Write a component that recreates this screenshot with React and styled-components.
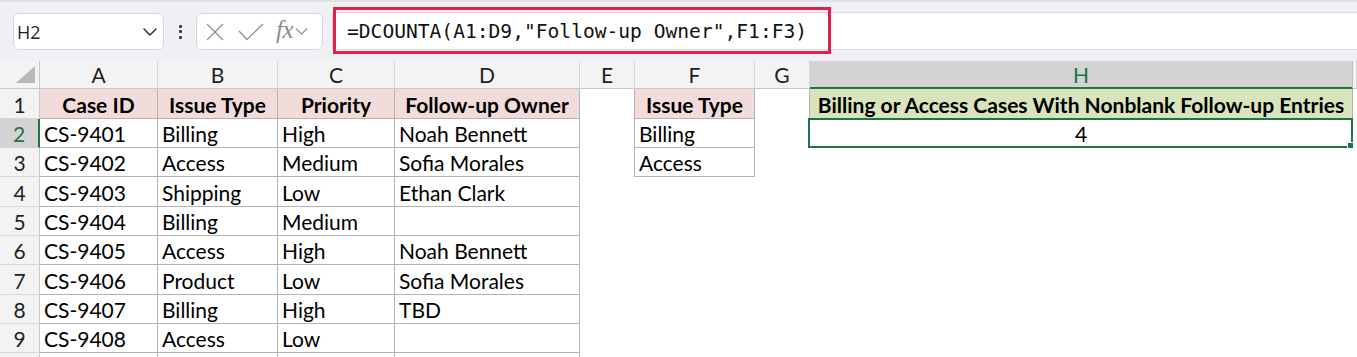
import React from 'react';
import styled, { createGlobalStyle } from 'styled-components';

const GlobalStyle = createGlobalStyle`
  html, body { margin: 0; padding: 0; background: #ffffff; }
  body { font-family: Lato, "Liberation Sans", sans-serif; }
`;

const Page = styled.div`
  width: 1357px;
  height: 357px;
  overflow: hidden;
  background: #ffffff;
`;

const Toolbar = styled.div`
  box-sizing: border-box;
  height: 61px;
  background: #eef0f3;
  border-top: 2px solid #dfe2e6;
  padding: 11px 0 0 13px;
  display: flex;
  align-items: flex-start;
`;

const NameBox = styled.div`
  box-sizing: border-box;
  width: 151px;
  height: 37px;
  background: #ffffff;
  border: 1px solid #d5d7da;
  border-radius: 6px;
  display: flex;
  align-items: center;
  justify-content: space-between;
  padding: 0 6px 0 3px;
  font-family: "Open Sans", "Noto Sans", sans-serif;
  font-size: 18px;
  color: #1f1f1f;
`;

const Dots = styled.div`
  width: 32px;
  height: 37px;
  display: flex;
  flex-direction: column;
  align-items: center;
  justify-content: center;
  gap: 2.5px;
`;

const Dot = styled.span`
  width: 3px;
  height: 3px;
  border-radius: 1px;
  background: #3c3c3c;
`;

const FxBox = styled.div`
  box-sizing: border-box;
  width: 127px;
  height: 37px;
  background: #ffffff;
  border: 1px solid #d5d7da;
  border-radius: 6px;
  display: flex;
  align-items: center;
  padding: 0 0 0 9px;
`;

const FxText = styled.span`
  font-family: "Liberation Serif", "DejaVu Serif", serif;
  font-style: italic;
  font-size: 25px;
  color: #8c8c8c;
  margin: -3px 2px 0 12px;
  letter-spacing: -0.5px;
`;

const FormulaBar = styled.div`
  position: relative;
  box-sizing: border-box;
  flex: 1;
  height: 38px;
  margin-left: 9px;
  margin-top: -1px;
  background: #ffffff;
  border-top: 1px solid #d9dbde;
  border-bottom: 1px solid #d9dbde;
  border-left: 1px solid #d9dbde;
  display: flex;
  align-items: center;
  padding-left: 14px;
  font-family: "DejaVu Sans Mono", "Liberation Mono", monospace;
  font-size: 19.6px;
  color: #111111;
  white-space: pre;
`;

const Highlight = styled.div`
  position: absolute;
  left: 0;
  top: -6px;
  width: 498px;
  height: 47px;
  box-sizing: border-box;
  border: 3px solid #e0204e;
  pointer-events: none;
`;

const Sheet = styled.div`
  display: grid;
  grid-template-columns: 40px 118px 120px 117px 185px 55px 120px 55px 543px 1fr;
  grid-template-rows: 28px 30px 29px 29px 30px 29px 29px 30px 29px 29px 30px;
  font-size: 21px;
  line-height: 1.2;
`;

const Corner = styled.div`
  box-sizing: border-box;
  background: #f3f3f3;
  border-right: 1px solid #c9c9c9;
  border-bottom: 1px solid #c9c9c9;
  display: flex;
  align-items: flex-end;
  justify-content: flex-end;
  padding: 0 4px 5px 0;
`;

const CornerTriangle = styled.span`
  width: 19px;
  height: 17px;
  background: #b9b9b9;
  clip-path: polygon(100% 0, 100% 100%, 0 100%);
`;

const ColHead = styled.div`
  box-sizing: border-box;
  background: ${(p) => (p.$selected ? '#d3d3d3' : '#f3f3f3')};
  color: ${(p) => (p.$selected ? '#217346' : '#1e1e1e')};
  border-right: 1px solid ${(p) => (p.$selected ? '#bdbdbd' : '#d6d6d6')};
  border-bottom: ${(p) => (p.$selected ? '2px solid #217346' : '1px solid #c9c9c9')};
  display: flex;
  align-items: flex-end;
  justify-content: center;
  padding-bottom: ${(p) => (p.$selected ? '0' : '0.5px')};
`;

const RowHead = styled.div`
  box-sizing: border-box;
  background: ${(p) => (p.$selected ? '#d3d3d3' : '#f3f3f3')};
  color: ${(p) => (p.$selected ? '#217346' : '#1e1e1e')};
  border-right: ${(p) => (p.$selected ? '2px solid #217346' : '1px solid #c9c9c9')};
  border-bottom: 1px solid #d6d6d6;
  display: flex;
  align-items: flex-end;
  justify-content: center;
  padding-bottom: 0.5px;
`;

const Cell = styled.div`
  position: relative;
  box-sizing: border-box;
  min-width: 0;
  background: ${(p) => p.$fill || '#ffffff'};
  border-right: ${(p) => (p.$right ? '1px solid #b3b3b3' : '0')};
  border-bottom: ${(p) => (p.$bottom ? '1px solid #b3b3b3' : '0')};
  display: flex;
  align-items: flex-end;
  justify-content: ${(p) => (p.$center ? 'center' : 'flex-start')};
  padding-bottom: ${(p) => (p.$bottom ? '0.5px' : '1.5px')};
  padding-left: ${(p) => (p.$center ? '0' : '4px')};
  font-weight: ${(p) => (p.$bold ? 700 : 400)};
  color: #000000;
  white-space: nowrap;
`;

const Selection = styled.div`
  position: absolute;
  left: -2px;
  top: -1px;
  right: -1px;
  bottom: -1px;
  border: 2px solid #217346;
  pointer-events: none;
`;

const FillHandle = styled.span`
  position: absolute;
  right: -4px;
  bottom: -4px;
  width: 6px;
  height: 6px;
  background: #217346;
  border: 1px solid #ffffff;
`;

const PINK = '#f2dcdb';
const GREEN = '#d8e4bc';

const columns = ['A', 'B', 'C', 'D', 'E', 'F', 'G', 'H', ''];

const tableRows = [
  ['Case ID', 'Issue Type', 'Priority', 'Follow-up Owner'],
  ['CS-9401', 'Billing', 'High', 'Noah Bennett'],
  ['CS-9402', 'Access', 'Medium', 'Sofia Morales'],
  ['CS-9403', 'Shipping', 'Low', 'Ethan Clark'],
  ['CS-9404', 'Billing', 'Medium', ''],
  ['CS-9405', 'Access', 'High', 'Noah Bennett'],
  ['CS-9406', 'Product', 'Low', 'Sofia Morales'],
  ['CS-9407', 'Billing', 'High', 'TBD'],
  ['CS-9408', 'Access', 'Low', ''],
];

const criteria = ['Issue Type', 'Billing', 'Access'];

function Chevron({ color, width = 14, height = 8 }) {
  return (
    <svg width={width} height={height} viewBox="0 0 14 8" fill="none">
      <polyline points="1,1 7,7 13,1" stroke={color} strokeWidth="1.5" strokeLinecap="round" strokeLinejoin="round" />
    </svg>
  );
}

function CancelIcon() {
  return (
    <svg width="18" height="18" viewBox="0 0 18 18" fill="none">
      <line x1="1" y1="1" x2="17" y2="17" stroke="#8f8f8f" strokeWidth="1.3" />
      <line x1="17" y1="1" x2="1" y2="17" stroke="#8f8f8f" strokeWidth="1.3" />
    </svg>
  );
}

function CheckIcon() {
  return (
    <svg width="26" height="18" viewBox="0 0 26 18" fill="none" style={{ marginLeft: 14 }}>
      <polyline points="1,8 9,16.5 25,1" stroke="#8f8f8f" strokeWidth="1.3" strokeLinejoin="round" />
    </svg>
  );
}

function Row({ index, selected }) {
  const data = tableRows[index - 1];
  const header = index === 1;
  const cells = [];
  for (let c = 0; c < 4; c++) {
    cells.push(
      <Cell key={c} $right $bottom={index <= 9} $fill={header ? PINK : undefined} $bold={header} $center={header}>
        {data ? data[c] : ''}
      </Cell>
    );
  }
  const inCriteria = index <= 3;
  cells.push(<Cell key="e" $right={inCriteria} />);
  cells.push(
    <Cell key="f" $right={inCriteria} $bottom={inCriteria} $fill={header ? PINK : undefined} $bold={header} $center={header}>
      {inCriteria ? criteria[index - 1] : ''}
    </Cell>
  );
  const inResult = index <= 2;
  cells.push(<Cell key="g" $right={inResult} />);
  cells.push(
    <Cell key="h" $right={inResult} $bottom={inResult} $fill={header ? GREEN : undefined} $bold={header} $center>
      {header ? 'Billing or Access Cases With Nonblank Follow-up Entries' : index === 2 ? '4' : ''}
      {index === 2 && (
        <Selection>
          <FillHandle />
        </Selection>
      )}
    </Cell>
  );
  cells.push(<Cell key="i" />);
  return (
    <>
      <RowHead $selected={selected}>{index <= 9 ? index : ''}</RowHead>
      {cells}
    </>
  );
}

export default function App() {
  return (
    <Page>
      <GlobalStyle />
      <Toolbar>
        <NameBox>
          <span>H2</span>
          <Chevron color="#333333" />
        </NameBox>
        <Dots>
          <Dot />
          <Dot />
          <Dot />
        </Dots>
        <FxBox>
          <CancelIcon />
          <CheckIcon />
          <FxText>fx</FxText>
          <Chevron color="#8f8f8f" width={13} height={7} />
        </FxBox>
        <FormulaBar>
          {'=DCOUNTA(A1:D9,"Follow-up Owner",F1:F3)'}
          <Highlight />
        </FormulaBar>
      </Toolbar>
      <Sheet>
        <Corner>
          <CornerTriangle />
        </Corner>
        {columns.map((c, i) => (
          <ColHead key={i} $selected={c === 'H'}>
            {c}
          </ColHead>
        ))}
        {[1, 2, 3, 4, 5, 6, 7, 8, 9, 10].map((r) => (
          <Row key={r} index={r} selected={r === 2} />
        ))}
      </Sheet>
    </Page>
  );
}
